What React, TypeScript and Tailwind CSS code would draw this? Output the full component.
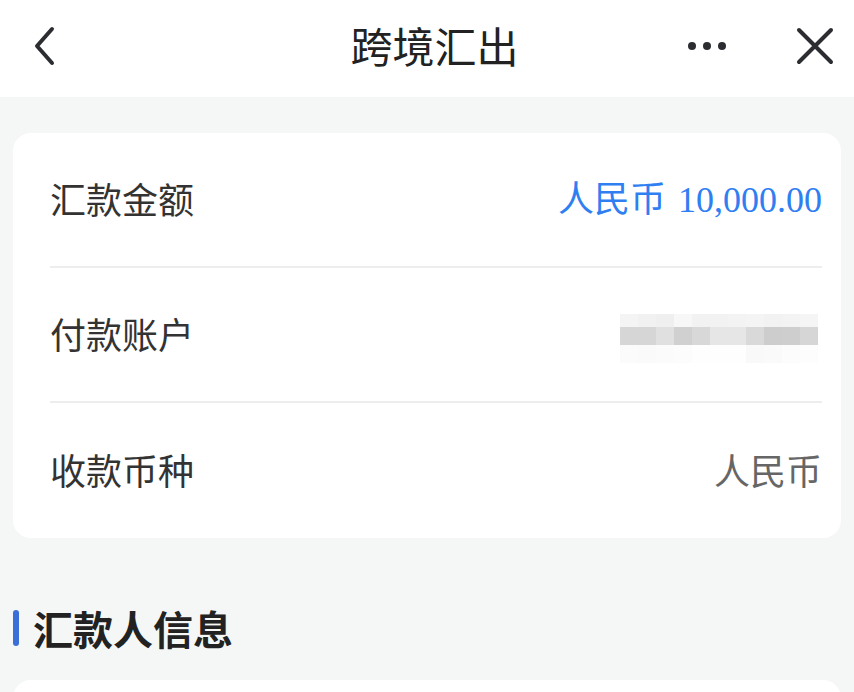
import React from 'react';

const cjk = { fontFamily: '"Noto Sans CJK SC", "Noto Sans", sans-serif' };

// mosaic used to mask the account number
const mosaic = [
  ['#f4f4f4', '#f1f1f1', '#efefef', '#f7f7f7', '#f2f2f2', '#f2f2f2', '#f3f3f3', '#f4f4f4', '#f2f2f2', '#f3f3f3', '#f5f5f5'],
  ['#d6d6d6', '#d6d6d6', '#e0e0e0', '#d0d0d0', '#d8d8d8', '#e6e6e6', '#e6e6e6', '#d9d9d9', '#cdcdcd', '#cecece', '#d6d6d6'],
  ['#fbfbfb', '#fafafa', '#fbfbfb', '#fcfcfc', '#fefefe', '#fefefe', '#fefefe', '#f9f9f9', '#fafafa', '#fcfcfc', '#fdfdfd'],
];

function Row({ label, children, last }: { label: string; children: React.ReactNode; last?: boolean }) {
  return (
    <div className={`h-[135px] flex items-center justify-between pb-[4px] ${last ? '' : 'border-b-2 border-[#ededed]'}`}>
      <span className="text-[36px] text-[#333333]" style={cjk}>{label}</span>
      {children}
    </div>
  );
}

export default function App() {
  return (
    <div className="w-[854px] h-[692px] overflow-hidden bg-[#f5f7f7]" style={cjk}>
      {/* Header */}
      <div className="h-[97px] bg-white grid grid-cols-[1fr_auto_1fr] items-center pl-[32px] pr-[19px]">
        <svg width="28" height="40" viewBox="0 0 28 40" className="-mt-[6px]">
          <path d="M20 3 L5 20 L20 37" fill="none" stroke="#2b2d31" strokeWidth="4" strokeLinecap="round" strokeLinejoin="round" />
        </svg>
        <span className="text-[42px] text-[#222222] ml-[2px] -mt-[8px] leading-none">跨境汇出</span>
        <div className="flex items-center justify-end gap-[69px] -mt-[6px]">
          <div className="flex gap-[7px]">
            <span className="w-[8px] h-[8px] rounded-full bg-[#2b2d31]" />
            <span className="w-[8px] h-[8px] rounded-full bg-[#2b2d31]" />
            <span className="w-[8px] h-[8px] rounded-full bg-[#2b2d31]" />
          </div>
          <svg width="40" height="40" viewBox="0 0 40 40">
            <path d="M4 4 L36 36 M36 4 L4 36" fill="none" stroke="#2b2d31" strokeWidth="4" strokeLinecap="round" />
          </svg>
        </div>
      </div>

      {/* Summary card */}
      <div className="mx-[13px] mt-[36px] bg-white rounded-[18px] px-[37px] pr-[19px]">
        <Row label="汇款金额">
          <span className="text-[36px] text-[#2f7ff2] flex items-baseline">
            <span style={cjk}>人民币</span>
            <span className="ml-[12px]" style={{ fontFamily: '"Liberation Serif", serif' }}>10,000.00</span>
          </span>
        </Row>
        <Row label="付款账户">
          <div className="flex flex-col mr-[4px] mt-[12px]">
            {mosaic.map((line, i) => (
              <div key={i} className={`flex ${i === 0 ? 'h-[13px]' : 'h-[18px]'}`}>
                {line.map((c, j) => (
                  <div key={j} className="w-[18px]" style={{ backgroundColor: c }} />
                ))}
              </div>
            ))}
          </div>
        </Row>
        <Row label="收款币种" last>
          <span className="text-[36px] text-[#666666]">人民币</span>
        </Row>
      </div>

      {/* Section title */}
      <div className="flex items-center mt-[60px] px-[13px]">
        <span className="w-[6px] h-[36px] rounded-full bg-[#3a6fd8]" />
        <span className="ml-[14px] text-[40px] font-bold text-[#222222]">汇款人信息</span>
      </div>

      <div className="mx-[13px] mt-[22px] h-[60px] bg-white rounded-[18px]" />
    </div>
  );
}
